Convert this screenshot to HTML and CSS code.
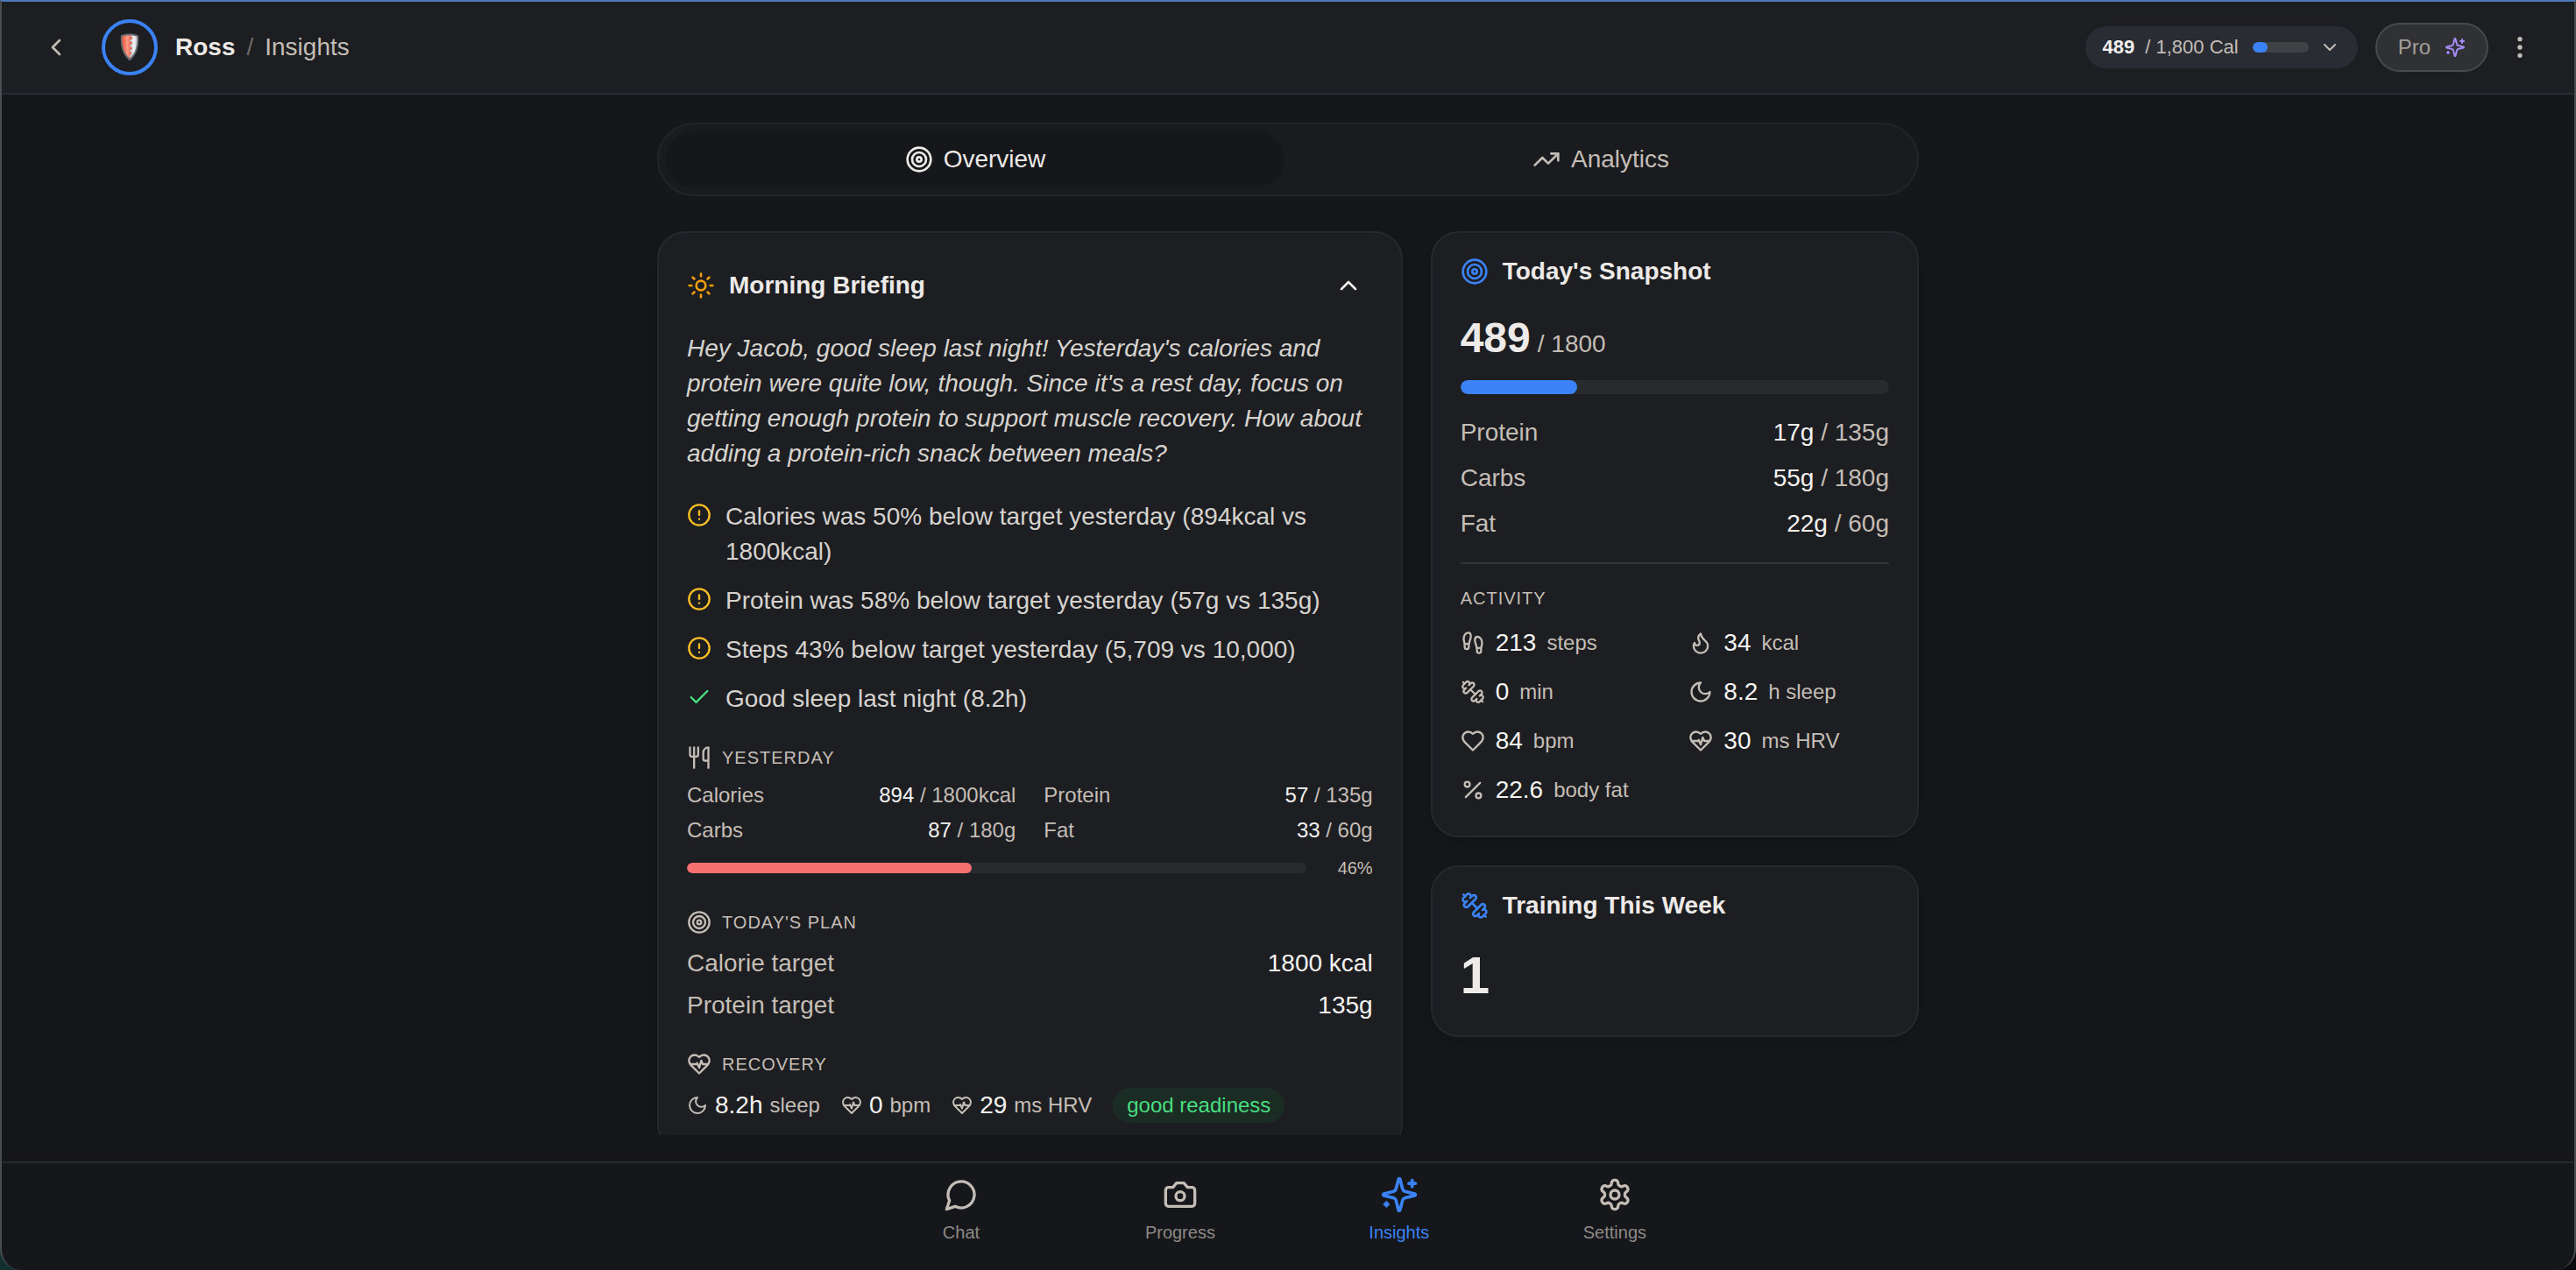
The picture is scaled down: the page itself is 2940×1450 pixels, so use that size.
FILE: index.html
```html
<!DOCTYPE html>
<html lang="en">
<head>
<meta charset="utf-8">
<meta name="viewport" content="width=device-width, initial-scale=1">
<title>Ross / Insights</title>
<link rel="stylesheet" href="styles.css">
</head>
<body>
<svg class="sprite" aria-hidden="true">
  <symbol id="i-target" viewBox="0 0 24 24"><circle cx="12" cy="12" r="10"/><circle cx="12" cy="12" r="6"/><circle cx="12" cy="12" r="2"/></symbol>
  <symbol id="i-trend" viewBox="0 0 24 24"><path d="M22 7 13.5 15.5 8.5 10.5 2 17"/><path d="M16 7h6v6"/></symbol>
  <symbol id="i-left" viewBox="0 0 24 24"><path d="m15 18-6-6 6-6"/></symbol>
  <symbol id="i-down" viewBox="0 0 24 24"><path d="m6 9 6 6 6-6"/></symbol>
  <symbol id="i-up" viewBox="0 0 24 24"><path d="m18 15-6-6-6 6"/></symbol>
  <symbol id="i-more" viewBox="0 0 24 24"><circle cx="12" cy="12" r="1"/><circle cx="12" cy="5" r="1"/><circle cx="12" cy="19" r="1"/></symbol>
  <symbol id="i-sparkles" viewBox="0 0 24 24"><path d="M9.937 15.5A2 2 0 0 0 8.5 14.063l-6.135-1.582a.5.5 0 0 1 0-.962L8.5 9.936A2 2 0 0 0 9.937 8.5l1.582-6.135a.5.5 0 0 1 .963 0L14.063 8.5A2 2 0 0 0 15.5 9.937l6.135 1.581a.5.5 0 0 1 0 .964L15.5 14.063a2 2 0 0 0-1.437 1.437l-1.582 6.135a.5.5 0 0 1-.963 0z"/><path d="M20 3v4"/><path d="M22 5h-4"/><path d="M4 17v2"/><path d="M5 18H3"/></symbol>
  <symbol id="i-sun" viewBox="0 0 24 24"><circle cx="12" cy="12" r="4"/><path d="M12 2v2M12 20v2M4.93 4.93l1.41 1.41M17.66 17.66l1.41 1.41M2 12h2M20 12h2M6.34 17.66l-1.41 1.41M19.07 4.93l-1.41 1.41"/></symbol>
  <symbol id="i-alert" viewBox="0 0 24 24"><circle cx="12" cy="12" r="10"/><path d="M12 8v4M12 16h.01"/></symbol>
  <symbol id="i-check" viewBox="0 0 24 24"><path d="M20 6 9 17l-5-5"/></symbol>
  <symbol id="i-utensils" viewBox="0 0 24 24"><path d="M3 2v7c0 1.1.9 2 2 2h4a2 2 0 0 0 2-2V2"/><path d="M7 2v20"/><path d="M21 15V2a5 5 0 0 0-5 5v6c0 1.1.9 2 2 2h3Zm0 0v7"/></symbol>
  <symbol id="i-heart" viewBox="0 0 24 24"><path d="M19 14c1.49-1.46 3-3.21 3-5.5A5.5 5.5 0 0 0 16.5 3c-1.76 0-3 .5-4.5 2-1.5-1.5-2.74-2-4.5-2A5.5 5.5 0 0 0 2 8.5c0 2.3 1.5 4.05 3 5.5l7 7Z"/></symbol>
  <symbol id="i-pulse" viewBox="0 0 24 24"><path d="M19 14c1.49-1.46 3-3.21 3-5.5A5.5 5.5 0 0 0 16.5 3c-1.76 0-3 .5-4.5 2-1.5-1.5-2.74-2-4.5-2A5.5 5.5 0 0 0 2 8.5c0 2.3 1.5 4.05 3 5.5l7 7Z"/><path d="M3.22 12H9.5l.5-1 2 4.5 2-7 1.5 3.5h5.27"/></symbol>
  <symbol id="i-moon" viewBox="0 0 24 24"><path d="M12 3a6 6 0 0 0 9 9 9 9 0 1 1-9-9Z"/></symbol>
  <symbol id="i-steps" viewBox="0 0 24 24"><path d="M4 16v-2.38C4 11.5 2.97 10.5 3 8c.03-2.72 1.49-6 4.5-6C9.37 2 10 3.8 10 5.5c0 3.11-2 5.66-2 8.68V16a2 2 0 1 1-4 0Z"/><path d="M20 20v-2.38c0-2.12 1.03-3.12 1-5.62-.03-2.72-1.49-6-4.5-6C14.63 6 14 7.8 14 9.5c0 3.11 2 5.66 2 8.68V20a2 2 0 1 0 4 0Z"/><path d="M16 17h4M4 13h4"/></symbol>
  <symbol id="i-flame" viewBox="0 0 24 24"><path d="M8.5 14.5A2.5 2.5 0 0 0 11 12c0-1.38-.5-2-1-3-1.072-2.143-.224-4.054 2-6 .5 2.5 2 4.9 4 6.5 2 1.6 3 3.5 3 5.5a7 7 0 1 1-14 0c0-1.153.433-2.294 1-3a2.5 2.5 0 0 0 2.5 2.5z"/></symbol>
  <symbol id="i-dumbbell" viewBox="0 0 24 24"><path d="M14.4 14.4 9.6 9.6"/><path d="M18.657 21.485a2 2 0 1 1-2.829-2.828l-1.767 1.768a2 2 0 1 1-2.829-2.829l6.364-6.364a2 2 0 1 1 2.829 2.829l-1.768 1.767a2 2 0 1 1 2.828 2.829z"/><path d="m21.5 21.5-1.4-1.4"/><path d="M3.9 3.9 2.5 2.5"/><path d="M6.404 12.768a2 2 0 1 1-2.829-2.829l1.768-1.767a2 2 0 1 1-2.828-2.829l2.828-2.828a2 2 0 1 1 2.829 2.828l1.767-1.768a2 2 0 1 1 2.829 2.829z"/></symbol>
  <symbol id="i-percent" viewBox="0 0 24 24"><path d="M19 5 5 19"/><circle cx="6.5" cy="6.5" r="2.5"/><circle cx="17.5" cy="17.5" r="2.5"/></symbol>
  <symbol id="i-chat" viewBox="0 0 24 24"><path d="M7.9 20A9 9 0 1 0 4 16.1L2 22Z"/></symbol>
  <symbol id="i-camera" viewBox="0 0 24 24"><path d="M14.5 4h-5L7 7H4a2 2 0 0 0-2 2v9a2 2 0 0 0 2 2h16a2 2 0 0 0 2-2V9a2 2 0 0 0-2-2h-3l-2.5-3z"/><circle cx="12" cy="13" r="3"/></symbol>
  <symbol id="i-settings" viewBox="0 0 24 24"><path d="M12.22 2h-.44a2 2 0 0 0-2 2v.18a2 2 0 0 1-1 1.73l-.43.25a2 2 0 0 1-2 0l-.15-.08a2 2 0 0 0-2.73.73l-.22.38a2 2 0 0 0 .73 2.73l.15.1a2 2 0 0 1 1 1.72v.51a2 2 0 0 1-1 1.74l-.15.09a2 2 0 0 0-.73 2.73l.22.38a2 2 0 0 0 2.73.73l.15-.08a2 2 0 0 1 2 0l.43.25a2 2 0 0 1 1 1.73V20a2 2 0 0 0 2 2h.44a2 2 0 0 0 2-2v-.18a2 2 0 0 1 1-1.73l.43-.25a2 2 0 0 1 2 0l.15.08a2 2 0 0 0 2.73-.73l.22-.39a2 2 0 0 0-.73-2.73l-.15-.08a2 2 0 0 1-1-1.74v-.5a2 2 0 0 1 1-1.74l.15-.09a2 2 0 0 0 .73-2.73l-.22-.38a2 2 0 0 0-2.73-.73l-.15.08a2 2 0 0 1-2 0l-.43-.25a2 2 0 0 1-1-1.73V4a2 2 0 0 0-2-2z"/><circle cx="12" cy="12" r="3"/></symbol>
</svg>

<div class="app">
  <header class="topbar">
    <button class="icon-btn" aria-label="Back"><svg class="icon icon-32"><use href="#i-left"/></svg></button>
    <span class="avatar">
      <svg class="shield" viewBox="0 0 22 32" aria-hidden="true">
        <defs>
          <linearGradient id="red" x1="0" x2="1" y1="0" y2="0"><stop offset="0" stop-color="#f4543c"/><stop offset=".5" stop-color="#ff9c88"/><stop offset="1" stop-color="#d9432b"/></linearGradient>
          <linearGradient id="silver" x1="0" x2="1" y1="0" y2="0"><stop offset="0" stop-color="#b9bcc0"/><stop offset=".6" stop-color="#f5f6f8"/><stop offset="1" stop-color="#c3c6ca"/></linearGradient>
        </defs>
        <path d="M11 .5C14 .5 18 1 21 2.5c.8 10-.5 21-10 29C1.5 23.500.2 12.500 1 2.500 4 1 8 .5 11 .5Z" fill="#6d6f72"/>
        <path d="M11 2.5c3 0 6 .4 8.300 1.500.5 8.500-.8 17.500-8.300 24.500Z" fill="url(#silver)"/>
        <path d="M11 2.5c-3 0-6 .4-8.300 1.500-.5 8.500.8 17.500 8.300 24.500v-3l2.500-3-3-2.500 4-3-4-2.500 4-3.500-4-2.500 4-3Z" fill="url(#red)"/>
      </svg>
    </span>
    <nav class="crumbs" aria-label="Breadcrumb"><strong>Ross</strong><span class="slash">/</span><span>Insights</span></nav>
    <button class="cal-pill"><strong>489</strong><span>/ 1,800 Cal</span><span class="mini-track"><span class="mini-fill" style="width:27%"></span></span><svg class="icon icon-24"><use href="#i-down"/></svg></button>
    <button class="pro-pill">Pro<svg class="icon icon-24"><use href="#i-sparkles"/></svg></button>
    <button class="icon-btn more" aria-label="More options"><svg class="icon icon-32"><use href="#i-more"/></svg></button>
  </header>

  <main class="scroll">
    <div class="content">
      <div class="tabs" role="tablist">
        <button class="tab active" role="tab" aria-selected="true"><svg class="icon icon-32"><use href="#i-target"/></svg>Overview</button>
        <button class="tab" role="tab" aria-selected="false"><svg class="icon icon-32"><use href="#i-trend"/></svg>Analytics</button>
      </div>

      <div class="columns">
        <section class="card briefing">
          <div class="brief-head">
            <svg class="icon icon-32 amber"><use href="#i-sun"/></svg>
            <h2>Morning Briefing</h2>
            <button class="collapse" aria-label="Collapse"><svg class="icon icon-32"><use href="#i-up"/></svg></button>
          </div>
          <p class="message">Hey Jacob, good sleep last night! Yesterday's calories and protein were quite low, though. Since it's a rest day, focus on getting enough protein to support muscle recovery. How about adding a protein-rich snack between meals?</p>
          <ul class="notes">
            <li><svg class="icon icon-28 warn"><use href="#i-alert"/></svg><span>Calories was 50% below target yesterday (894kcal vs 1800kcal)</span></li>
            <li><svg class="icon icon-28 warn"><use href="#i-alert"/></svg><span>Protein was 58% below target yesterday (57g vs 135g)</span></li>
            <li><svg class="icon icon-28 warn"><use href="#i-alert"/></svg><span>Steps 43% below target yesterday (5,709 vs 10,000)</span></li>
            <li><svg class="icon icon-28 good"><use href="#i-check"/></svg><span>Good sleep last night (8.2h)</span></li>
          </ul>

          <section class="block">
            <h3 class="label"><svg class="icon icon-28"><use href="#i-utensils"/></svg>Yesterday</h3>
            <dl class="macro-grid">
              <div class="pair"><dt>Calories</dt><dd><b>894</b> / 1800kcal</dd></div>
              <div class="pair"><dt>Protein</dt><dd><b>57</b> / 135g</dd></div>
              <div class="pair"><dt>Carbs</dt><dd><b>87</b> / 180g</dd></div>
              <div class="pair"><dt>Fat</dt><dd><b>33</b> / 60g</dd></div>
            </dl>
            <div class="score">
              <div class="track thin"><div class="fill red" style="width:46%"></div></div>
              <span class="score-value">46%</span>
            </div>
          </section>

          <section class="block">
            <h3 class="label"><svg class="icon icon-28"><use href="#i-target"/></svg>Today's Plan</h3>
            <dl class="plan">
              <div class="pair"><dt>Calorie target</dt><dd><b>1800 kcal</b></dd></div>
              <div class="pair"><dt>Protein target</dt><dd><b>135g</b></dd></div>
            </dl>
          </section>

          <section class="block">
            <h3 class="label"><svg class="icon icon-28"><use href="#i-pulse"/></svg>Recovery</h3>
            <div class="recovery">
              <span class="vital"><svg class="icon icon-24"><use href="#i-moon"/></svg><b>8.2h</b><span>sleep</span></span>
              <span class="vital"><svg class="icon icon-24"><use href="#i-pulse"/></svg><b>0</b><span>bpm</span></span>
              <span class="vital"><svg class="icon icon-24"><use href="#i-pulse"/></svg><b>29</b><span>ms HRV</span></span>
              <span class="readiness">good readiness</span>
            </div>
          </section>
        </section>

        <div class="side">
          <section class="card compact">
            <div class="card-head"><svg class="icon icon-32 blue"><use href="#i-target"/></svg><h2>Today's Snapshot</h2></div>
            <p class="total"><strong>489</strong><span>/ 1800</span></p>
            <div class="track"><div class="fill" style="width:27.2%"></div></div>
            <dl class="macros">
              <div class="pair"><dt>Protein</dt><dd><b>17g</b> / 135g</dd></div>
              <div class="pair"><dt>Carbs</dt><dd><b>55g</b> / 180g</dd></div>
              <div class="pair"><dt>Fat</dt><dd><b>22g</b> / 60g</dd></div>
            </dl>
            <div class="activity">
              <h3 class="label">Activity</h3>
              <ul class="activity-grid">
                <li><svg class="icon icon-28"><use href="#i-steps"/></svg><b>213</b><span>steps</span></li>
                <li><svg class="icon icon-28"><use href="#i-flame"/></svg><b>34</b><span>kcal</span></li>
                <li><svg class="icon icon-28"><use href="#i-dumbbell"/></svg><b>0</b><span>min</span></li>
                <li><svg class="icon icon-28"><use href="#i-moon"/></svg><b>8.2</b><span>h sleep</span></li>
                <li><svg class="icon icon-28"><use href="#i-heart"/></svg><b>84</b><span>bpm</span></li>
                <li><svg class="icon icon-28"><use href="#i-pulse"/></svg><b>30</b><span>ms HRV</span></li>
                <li><svg class="icon icon-28"><use href="#i-percent"/></svg><b>22.6</b><span>body fat</span></li>
              </ul>
            </div>
          </section>

          <section class="card compact">
            <div class="card-head"><svg class="icon icon-32 blue"><use href="#i-dumbbell"/></svg><h2>Training This Week</h2></div>
            <p class="sessions">1</p>
          </section>
        </div>
      </div>
    </div>
  </main>

  <nav class="bottom-nav" aria-label="Main">
    <div class="nav-items">
      <a class="nav-item" href="#chat"><span class="nav-icon"><svg class="icon icon-40"><use href="#i-chat"/></svg></span>Chat</a>
      <a class="nav-item" href="#progress"><span class="nav-icon"><svg class="icon icon-40"><use href="#i-camera"/></svg></span>Progress</a>
      <a class="nav-item current" href="#insights" aria-current="page"><span class="nav-icon"><svg class="icon icon-44"><use href="#i-sparkles"/></svg></span>Insights</a>
      <a class="nav-item" href="#settings"><span class="nav-icon"><svg class="icon icon-40"><use href="#i-settings"/></svg></span>Settings</a>
    </div>
  </nav>
</div>
</body>
</html>
```

FILE: styles.css
```css
:root {
  --bg: #16171a;
  --surface: #1d1e21;
  --line: #26282d;
  --text: #edeae8;
  --body: #d6d3cf;
  --muted: #c4bdb6;
  --dim: #8d8986;
  --blue: #3b82f6;
}

* { box-sizing: border-box; }

body {
  margin: 0;
  background: linear-gradient(90deg, #12302f, #0b0b0d 50%);
  color: var(--text);
  font-family: "Helvetica Neue", "Liberation Sans", Arial, sans-serif;
  font-size: 28px;
  line-height: 40px;
}

h2, h3, p, ul, dl, dd { margin: 0; padding: 0; }
ul { list-style: none; }
b { font-weight: 400; color: #f5f3f1; }
button { font: inherit; color: inherit; border: 0; background: none; padding: 0; cursor: pointer; }
a { color: inherit; text-decoration: none; }

.sprite { display: none; }

.icon {
  flex: none;
  display: block;
  fill: none;
  stroke: currentColor;
  stroke-width: 2;
  stroke-linecap: round;
  stroke-linejoin: round;
}
.icon-24 { width: 24px; height: 24px; }
.icon-28 { width: 28px; height: 28px; }
.icon-32 { width: 32px; height: 32px; }
.icon-40 { width: 40px; height: 40px; }
.icon-44 { width: 44px; height: 44px; }
.amber { color: #f59e0b; }
.warn { color: #fbbf24; }
.good { color: #4ade80; }
.blue { color: var(--blue); }

.app {
  display: flex;
  flex-direction: column;
  height: 100vh;
  overflow: hidden;
  background: var(--bg);
  border: 2px solid #4b4c4f;
  border-top-color: #4a7ab8;
  border-bottom: 0;
  border-radius: 0 0 24px 24px;
}

/* Top bar */
.topbar {
  flex: none;
  display: flex;
  align-items: center;
  height: 106px;
  padding: 0 46px;
  background: var(--surface);
  border-bottom: 2px solid #292b31;
}
.icon-btn { color: var(--muted); }
.avatar {
  display: flex;
  align-items: center;
  justify-content: center;
  width: 64px;
  height: 64px;
  margin-left: 36px;
  border: 4px solid var(--blue);
  border-radius: 50%;
}
.shield { width: 22px; height: 32px; }
.crumbs {
  display: flex;
  gap: 13px;
  margin: 0 auto 0 20px;
  color: var(--muted);
}
.crumbs strong { color: var(--text); }
.slash { color: #6d6a68; }
.cal-pill {
  display: flex;
  align-items: center;
  height: 48px;
  padding: 0 20px;
  border-radius: 24px;
  background: #2a2c34;
  color: var(--muted);
  font-size: 22px;
}
.cal-pill strong { margin-right: 12px; color: #f3f1ef; }
.mini-track {
  width: 64px;
  height: 12px;
  margin: 0 12px 0 16px;
  overflow: hidden;
  border-radius: 6px;
  background: #404145;
}
.mini-fill { display: block; height: 100%; border-radius: 6px; background: var(--blue); }
.pro-pill {
  display: flex;
  align-items: center;
  gap: 16px;
  height: 56px;
  margin: 0 20px;
  padding: 0 24px;
  border: 2px solid #48494c;
  border-radius: 28px;
  background: #303134;
  color: #a39d98;
  font-size: 24px;
}
.pro-pill .icon { color: #a78bfa; }

/* Scrolling content */
.scroll {
  flex: 1;
  min-height: 0;
  margin-bottom: 30px;
  padding-top: 32px;
  overflow: hidden;
}
.content { max-width: 1440px; margin: 0 auto; }

.tabs {
  display: grid;
  grid-template-columns: 1fr 1fr;
  gap: 8px;
  margin-bottom: 40px;
  padding: 8px;
  border: 2px solid #232428;
  border-radius: 42px;
  background: #1a1b1f;
}
.tab {
  display: flex;
  align-items: center;
  justify-content: center;
  gap: 12px;
  height: 64px;
  border-radius: 32px;
  color: var(--muted);
}
.tab.active { background: var(--bg); color: var(--text); }

.columns {
  display: grid;
  grid-template-columns: 29fr 19fr;
  align-items: start;
  gap: 32px;
}
.side { display: grid; gap: 32px; }

.card {
  padding: 32px;
  border: 2px solid var(--line);
  border-radius: 32px;
  background: var(--surface);
  box-shadow: 0 4px 16px rgba(0, 0, 0, .2);
}
.card.compact { padding-top: 24px; }
h2 { font-size: 28px; font-weight: 700; }

.brief-head { display: flex; align-items: center; gap: 16px; margin-bottom: 24px; }
.collapse { margin-left: auto; padding: 12px; }
.message { color: var(--body); font-style: italic; }
.notes { display: grid; gap: 16px; margin-top: 32px; color: var(--body); }
.notes li { display: flex; gap: 16px; }
.notes .icon { margin-top: 4px; }

.block { margin-top: 32px; }
.label {
  display: flex;
  align-items: center;
  gap: 12px;
  color: var(--muted);
  font-size: 20px;
  font-weight: 400;
  line-height: 30px;
  letter-spacing: 1px;
  text-transform: uppercase;
}
.pair { display: flex; justify-content: space-between; color: var(--muted); }
.macro-grid {
  display: grid;
  grid-template-columns: 1fr 1fr;
  gap: 8px 32px;
  margin: 12px 0;
  font-size: 24px;
  line-height: 32px;
}
.score { display: flex; align-items: center; gap: 16px; }
.score-value {
  width: 60px;
  color: var(--muted);
  font-size: 20px;
  line-height: 30px;
  text-align: right;
}
.track {
  flex: 1;
  height: 16px;
  overflow: hidden;
  border-radius: 8px;
  background: #282a2e;
}
.track.thin { height: 12px; }
.fill { height: 100%; border-radius: 8px; background: var(--blue); }
.fill.red { background: #f87171; }
.plan { display: grid; gap: 8px; margin-top: 12px; }
.recovery { display: flex; align-items: center; gap: 24px; margin-top: 12px; color: var(--muted); }
.vital { display: flex; align-items: center; gap: 8px; }
.vital span { font-size: 24px; }
.readiness {
  padding: 4px 16px;
  border-radius: 20px;
  background: #1a2c24;
  color: #4ade80;
  font-size: 24px;
  line-height: 32px;
}

.card-head { display: flex; align-items: center; gap: 16px; margin-bottom: 24px; }
.total { display: flex; align-items: baseline; gap: 8px; margin-bottom: 16px; color: var(--muted); }
.total strong { color: var(--text); font-size: 48px; line-height: 64px; }
.macros { display: grid; gap: 12px; margin: 24px 0; }
.activity { padding-top: 24px; border-top: 2px solid #30343c; }
.activity-grid {
  display: grid;
  grid-template-columns: 1fr 1fr;
  gap: 16px 32px;
  margin-top: 16px;
  color: var(--muted);
}
.activity-grid li { display: flex; align-items: center; gap: 12px; }
.activity-grid span { font-size: 24px; }
.sessions { font-size: 60px; font-weight: 700; line-height: 72px; }

/* Bottom navigation */
.bottom-nav { flex: none; padding: 14px 16px 28px; border-top: 2px solid #25282d; }
.nav-items { display: flex; justify-content: space-around; max-width: 992px; margin: 0 auto; }
.nav-item {
  display: flex;
  flex-direction: column;
  align-items: center;
  gap: 6px;
  min-width: 120px;
  padding: 0 24px;
  color: var(--dim);
  font-size: 20px;
  line-height: 30px;
}
.nav-icon { display: flex; align-items: center; height: 44px; color: var(--muted); }
.nav-item.current, .current .nav-icon { color: var(--blue); }
```
